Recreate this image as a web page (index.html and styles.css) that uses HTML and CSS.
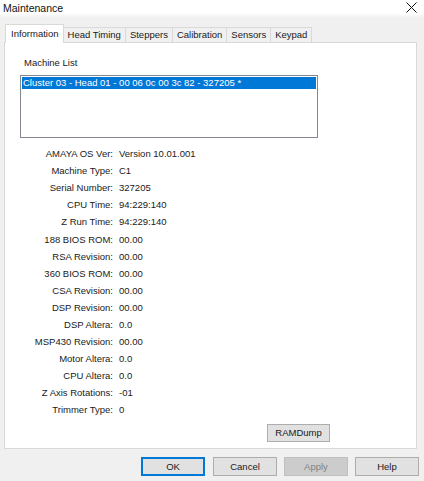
FILE: index.html
```html
<!DOCTYPE html>
<html>
<head>
<meta charset="utf-8">
<link rel="stylesheet" href="styles.css">
</head>
<body>
<div class="window">
  <div class="titlebar">
    <span class="title">Maintenance</span>
    <svg class="close" width="11" height="11" viewBox="0 0 11 11"><path d="M0.5 0.5 L10.5 10.5 M10.5 0.5 L0.5 10.5" stroke="#111" stroke-width="1" fill="none"/></svg>
  </div>
  <div class="tabs">
    <div class="tab active">Information</div>
    <div class="tab">Head Timing</div>
    <div class="tab">Steppers</div>
    <div class="tab">Calibration</div>
    <div class="tab">Sensors</div>
    <div class="tab">Keypad</div>
  </div>
  <div class="panel">
    <div class="list-label">Machine List</div>
    <div class="listbox">
      <div class="list-item selected">Cluster 03 - Head 01 - 00 06 0c 00 3c 82 - 327205 *</div>
    </div>
    <div class="info">
      <span class="k">AMAYA OS Ver:</span><span class="v">Version 10.01.001</span>
      <span class="k">Machine Type:</span><span class="v">C1</span>
      <span class="k">Serial Number:</span><span class="v">327205</span>
      <span class="k">CPU Time:</span><span class="v">94:229:140</span>
      <span class="k">Z Run Time:</span><span class="v">94:229:140</span>
      <span class="k">188 BIOS ROM:</span><span class="v">00.00</span>
      <span class="k">RSA Revision:</span><span class="v">00.00</span>
      <span class="k">360 BIOS ROM:</span><span class="v">00.00</span>
      <span class="k">CSA Revision:</span><span class="v">00.00</span>
      <span class="k">DSP Revision:</span><span class="v">00.00</span>
      <span class="k">DSP Altera:</span><span class="v">0.0</span>
      <span class="k">MSP430 Revision:</span><span class="v">00.00</span>
      <span class="k">Motor Altera:</span><span class="v">0.0</span>
      <span class="k">CPU Altera:</span><span class="v">0.0</span>
      <span class="k">Z Axis Rotations:</span><span class="v">-01</span>
      <span class="k">Trimmer Type:</span><span class="v">0</span>
    </div>
    <button class="btn ramdump">RAMDump</button>
  </div>
  <div class="buttons">
    <button class="btn default">OK</button>
    <button class="btn">Cancel</button>
    <button class="btn disabled">Apply</button>
    <button class="btn">Help</button>
  </div>
</div>
</body>
</html>
```
FILE: styles.css
```css
* { box-sizing: border-box; }
html, body { margin: 0; padding: 0; }
body {
  width: 424px;
  height: 481px;
  background: #f0f0f0;
  font-family: "Liberation Sans", Arial, sans-serif;
  font-size: 9.5px;
  color: #1a1a1a;
  overflow: hidden;
}
.window { display: flex; flex-direction: column; height: 100%; }
.titlebar {
  height: 18px;
  background: linear-gradient(#ffffff 0, #ffffff 13px, #f0f0f0 18px);
  display: flex;
  align-items: flex-start;
  justify-content: space-between;
  padding: 2px 7px 0 3px;
}
.title { font-size: 10.5px; line-height: 12px; color: #111; }
.close { margin-top: 0; }
.tabs {
  display: flex;
  align-items: flex-end;
  height: 24px;
  padding-left: 5px;
  position: relative;
  z-index: 1;
}
.tab {
  height: 15px;
  line-height: 14px;
  padding: 0 4px;
  border: 1px solid #d9d9d9;
  border-bottom: none;
  border-left: none;
  background: #f0f0f0;
  white-space: nowrap;
}
.tab.active {
  height: 19px;
  line-height: 18px;
  margin-bottom: -1px;
  background: #fff;
  border-left: 1px solid #d9d9d9;
  padding: 0 4px 0 5px;
}
.panel {
  margin: 0 7px 0 4px;
  height: 407px;
  background: #fff;
  border: 1px solid #d9d9d9;
  padding-top: 14px;
  display: flex;
  flex-direction: column;
}
.list-label { line-height: 12px; margin-left: 19px; }
.listbox {
  margin: 6px 0 0 15px;
  width: 298px;
  height: 63px;
  border: 1px solid #828790;
  padding: 1px;
}
.list-item { height: 12px; line-height: 12px; padding-left: 1px; white-space: nowrap; }
.list-item.selected { background: #0078d7; color: #fff; }
.info {
  margin-top: 7px;
  display: grid;
  grid-template-columns: 108px auto;
  column-gap: 6px;
  grid-auto-rows: 17.1px;
  align-items: center;
}
.k { text-align: right; white-space: nowrap; }
.v { white-space: nowrap; }
.btn {
  font-family: inherit;
  font-size: 9.5px;
  color: #1a1a1a;
  background: #e1e1e1;
  border: 1px solid #adadad;
  padding: 0;
  margin: 0;
  height: 19px;
  width: 64px;
}
.ramdump { margin: 5px 0 0 262px; width: 63px; height: 18px; }
.buttons {
  display: flex;
  justify-content: flex-end;
  gap: 7px;
  padding: 8px 5px 0 0;
}
.btn.default { border: 2px solid #0078d7; margin-right: 1px; }
.btn.disabled { background: #cccccc; border-color: #bfbfbf; color: #838383; }
```
